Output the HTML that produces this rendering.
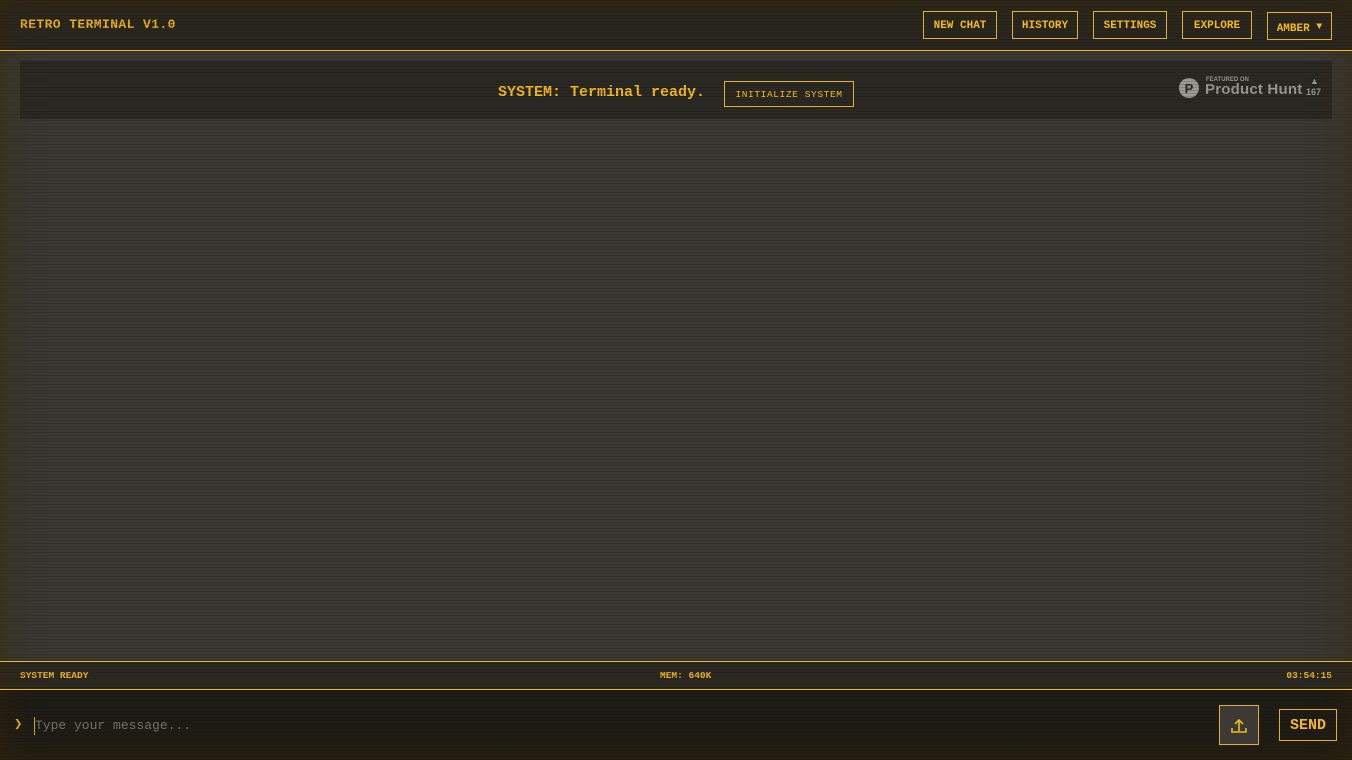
<!DOCTYPE html>
<html><head><style>
*{margin:0;padding:0;box-sizing:border-box}
body{width:1352px;height:760px;overflow:hidden;background:#3b3933;font-family:"Liberation Mono",monospace;color:#f5b820;position:relative}
.scan{position:absolute;inset:0;background:repeating-linear-gradient(to bottom,rgba(0,0,0,0.15) 0 1px,rgba(0,0,0,0) 1px 3px);pointer-events:none}
.vig{position:absolute;inset:0;box-shadow:inset 0 0 40px rgba(60,40,0,0.5);pointer-events:none}
header{position:absolute;left:0;top:0;width:1352px;height:50px;background:#2a2821}
.hl{position:absolute;left:0;width:1352px;height:1px;background:#f0b820;z-index:10}
.title{position:absolute;left:20px;top:17px;font-size:13px;letter-spacing:0.4px;font-weight:bold}
.btn{position:absolute;top:11px;height:28px;border:1px solid #e8b020;font-size:11px;line-height:29px;text-align:center;color:#f5b820;font-weight:bold;z-index:5}
.banner{position:absolute;left:20px;top:61px;width:1312px;height:58px;background:#2b2923}
.sys{position:absolute;left:498px;top:84px;font-size:15px;font-weight:bold}
.init{position:absolute;left:724px;top:81px;width:130px;height:26px;border:1px solid #e8b020;font-size:9.5px;line-height:25px;text-align:center;letter-spacing:0.6px;z-index:5}
.ph{position:absolute;left:1178px;top:76px;color:#9a9994;font-family:"Liberation Sans",sans-serif}
.status{position:absolute;left:0;top:662px;width:1352px;height:27px;background:#2b2922;font-size:9.5px;font-weight:bold}
.inp{position:absolute;left:0;top:690px;width:1352px;height:70px;background:#1f1d17}
</style></head><body>
<header>
<div class="title">RETRO TERMINAL V1.0</div>
<div class="btn" style="left:923px;width:74px">NEW CHAT</div>
<div class="btn" style="left:1012px;width:66px">HISTORY</div>
<div class="btn" style="left:1093px;width:74px">SETTINGS</div>
<div class="btn" style="left:1182px;width:70px">EXPLORE</div>
<div class="btn" style="left:1267px;width:65px;top:12px">AMBER <span style="font-size:10px;vertical-align:2px">▼</span></div>
</header>
<div class="hl" style="top:50px"></div>
<div class="banner"></div>
<div class="sys">SYSTEM: Terminal ready.</div>
<div class="init">INITIALIZE SYSTEM</div>
<div class="ph">
<svg width="22" height="22" style="position:absolute;left:0;top:1px"><circle cx="11" cy="11" r="10" fill="#9a9994"/><text x="11" y="16" font-size="13" font-weight="bold" fill="#2b2923" text-anchor="middle" font-family="Liberation Sans">P</text></svg>
<div style="position:absolute;left:28px;top:1px;font-size:6px;font-weight:bold;white-space:nowrap">FEATURED ON</div>
<div style="position:absolute;left:27px;top:5px;font-size:15px;font-weight:bold;white-space:nowrap;letter-spacing:0.2px">Product Hunt</div>
<div style="position:absolute;left:132px;top:0px;font-size:9px">▲</div>
<div style="position:absolute;left:128px;top:11px;font-size:9px;font-weight:bold">167</div>
</div>
<div class="hl" style="top:661px"></div>
<div class="status">
<span style="position:absolute;left:20px;top:8px">SYSTEM READY</span>
<span style="position:absolute;left:660px;top:8px">MEM: 640K</span>
<span style="position:absolute;right:20px;top:8px">03:54:15</span>
</div>
<div class="hl" style="top:689px"></div>
<div class="inp">
<span style="position:absolute;left:14px;top:26px;font-size:14px;font-weight:bold">❯</span>
<span style="position:absolute;left:34px;top:27px;width:1px;height:18px;background:#e8b020"></span>
<span style="position:absolute;left:35px;top:28px;font-size:13px;color:#77756c">Type your message...</span>
<div style="position:absolute;left:1219px;top:15px;width:40px;height:40px;border:1px solid #e8b020;background:#3c3a34;z-index:5">
<svg width="40" height="40" style="position:absolute;left:-1px;top:-1px" fill="none" stroke="#f5b820" stroke-width="1.6"><path d="M20 26V15M16 19l4-4 4 4M13 23v4h14v-4"/></svg></div>
<div style="position:absolute;left:1279px;top:19px;width:58px;height:32px;border:1px solid #e8b020;font-size:15px;font-weight:bold;line-height:31px;text-align:center;z-index:5">SEND</div>
</div>
<div class="scan"></div><div class="vig"></div>
</body></html>
